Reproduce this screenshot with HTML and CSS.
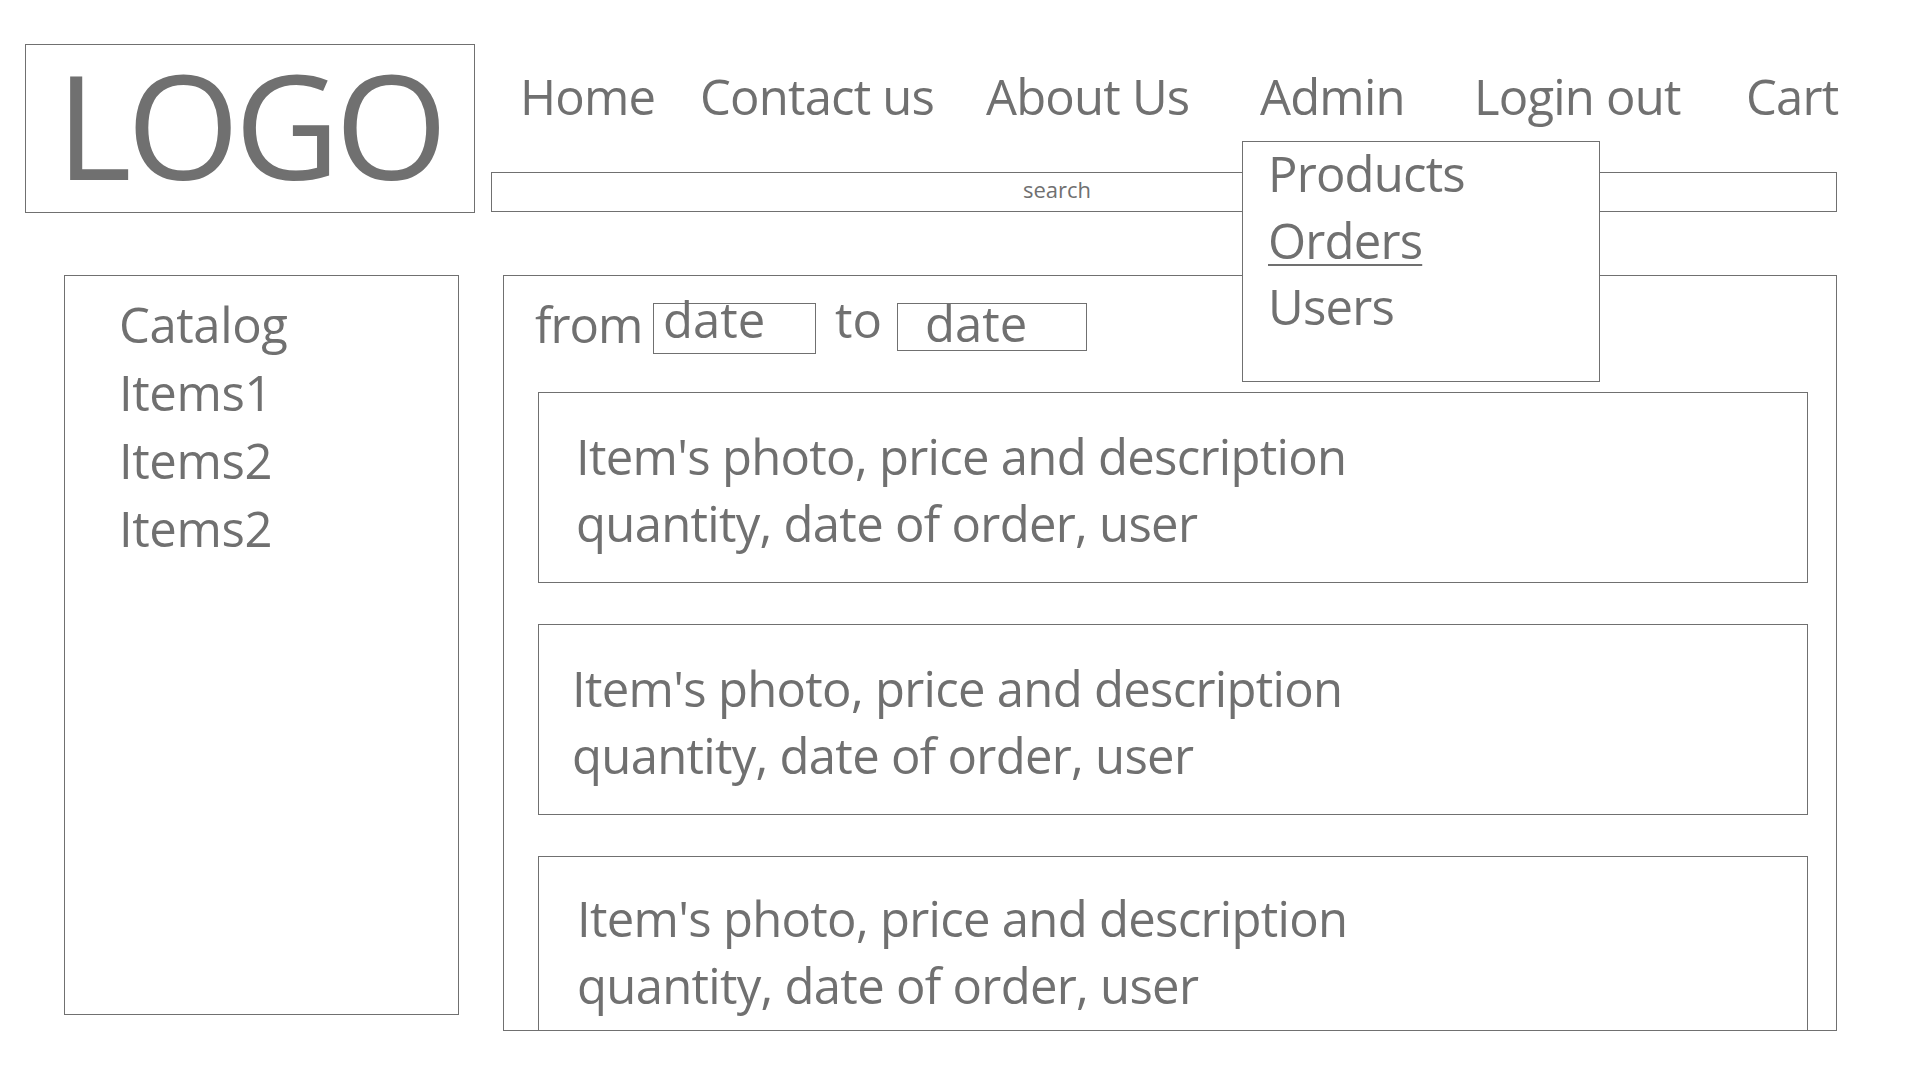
FILE: index.html
```html
<!DOCTYPE html>
<html lang="en">
<head>
<meta charset="utf-8">
<title>Orders - Admin</title>
<link rel="stylesheet" href="styles.css">
</head>
<body>
<div class="page">
  <header class="header">
    <div class="logo"><span class="logo-text">LOGO</span></div>
    <div class="nav-area">
      <nav class="nav">
        <a class="nav-item nav-home">Home</a>
        <a class="nav-item nav-contact">Contact us</a>
        <a class="nav-item nav-about">About Us</a>
        <div class="nav-item nav-admin">Admin
          <div class="dropdown">
            <div class="dropdown-item">Products</div>
            <div class="dropdown-item is-active">Orders</div>
            <div class="dropdown-item">Users</div>
          </div>
        </div>
        <a class="nav-item nav-login">Login out</a>
        <a class="nav-item nav-cart">Cart</a>
      </nav>
      <div class="search">search</div>
    </div>
  </header>

  <div class="content">
    <aside class="sidebar">
      <div class="side-item">Catalog</div>
      <div class="side-item">Items1</div>
      <div class="side-item">Items2</div>
      <div class="side-item">Items2</div>
    </aside>

    <main class="main">
      <div class="filter">
        <span class="filter-label label-from">from</span>
        <span class="date-box date-from">date</span>
        <span class="filter-label label-to">to</span>
        <span class="date-box date-to">date</span>
      </div>
      <div class="orders">
        <div class="order">
          <div class="order-line">Item's photo, price and description</div>
          <div class="order-line">quantity, date of order, user</div>
        </div>
        <div class="order order-shifted">
          <div class="order-line">Item's photo, price and description</div>
          <div class="order-line">quantity, date of order, user</div>
        </div>
        <div class="order order-last">
          <div class="order-line">Item's photo, price and description</div>
          <div class="order-line">quantity, date of order, user</div>
        </div>
      </div>
    </main>
  </div>
</div>
</body>
</html>
```

FILE: styles.css
```css
* {
  box-sizing: border-box;
}

html, body {
  margin: 0;
  padding: 0;
  background: #ffffff;
}

body {
  width: 1920px;
  height: 1080px;
  overflow: hidden;
  color: #707070;
  font-family: "Open Sans", "Noto Sans", sans-serif;
}

.page {
  width: 1920px;
}

/* ---------- header ---------- */
.header {
  display: flex;
  align-items: flex-start;
  gap: 16px;
  padding: 44px 83px 0 25px;
}

.logo {
  flex-shrink: 0;
  width: 450px;
  height: 169px;
  border: 1px solid #707070;
  padding: 0 0 0 30px;
  display: flex;
  align-items: center;
}

.logo-text {
  display: block;
  font-size: 145px;
  line-height: 150px;
  letter-spacing: -5px;
  white-space: nowrap;
  margin-top: -10px;
}

.nav-area {
  flex: 1;
  min-width: 0;
  display: flex;
  flex-direction: column;
}

.nav {
  display: flex;
  height: 128px;
  padding: 18px 0 0 29px;
  font-size: 49px;
  line-height: 68px;
  letter-spacing: -0.8px;
}

.nav-item {
  display: block;
  flex-shrink: 0;
  white-space: nowrap;
  color: #707070;
  text-decoration: none;
}

.nav-home { width: 180px; }
.nav-contact { width: 286px; }
.nav-about { width: 274px; }
.nav-admin { width: 214px; position: relative; }
.nav-login { width: 272px; }
.nav-cart { flex: 1 1 auto; min-width: 0; }

.search {
  height: 40px;
  border: 1px solid #707070;
  font-size: 22px;
  line-height: 33px;
  padding-left: 531px;
}

/* ---------- admin dropdown ---------- */
.dropdown {
  position: absolute;
  z-index: 10;
  left: -18px;
  top: 79px;
  width: 358px;
  height: 241px;
  background: #ffffff;
  border: 1px solid #707070;
  padding: 0 0 0 25px;
  font-size: 49px;
  line-height: 66.5px;
  letter-spacing: -0.8px;
}

.dropdown-item {
  position: relative;
  top: -2px;
}

.dropdown-item.is-active {
  text-decoration: underline;
  text-decoration-thickness: 2px;
  text-underline-offset: 5px;
}

/* ---------- content ---------- */
.content {
  display: flex;
  align-items: flex-start;
  gap: 44px;
  margin-top: 62px;
  padding: 0 83px 0 64px;
}

.sidebar {
  flex-shrink: 0;
  width: 395px;
  height: 740px;
  border: 1px solid #707070;
  padding: 14px 0 0 54px;
  font-size: 49px;
  line-height: 68px;
  letter-spacing: -0.4px;
}

.main {
  flex: 1;
  min-width: 0;
  height: 756px;
  border: 1px solid #707070;
  overflow: hidden;
  padding: 27px 28px 0 34px;
}

.filter {
  display: flex;
  align-items: flex-start;
  height: 51px;
  font-size: 49px;
}

.filter-label {
  display: block;
  white-space: nowrap;
}

.label-from {
  width: 118px;
  margin-left: -3px;
  line-height: 42px;
  letter-spacing: -1px;
}

.label-to {
  width: 62px;
  margin-left: 19px;
  line-height: 32px;
}

.date-box {
  display: block;
  border: 1px solid #707070;
}

.date-from {
  width: 163px;
  height: 51px;
  padding-left: 9px;
  line-height: 30px;
}

.date-to {
  width: 190px;
  height: 48px;
  padding-left: 27px;
  line-height: 38px;
}

.orders {
  display: flex;
  flex-direction: column;
  gap: 41px;
  margin-top: 38px;
}

.order {
  height: 191px;
  flex-shrink: 0;
  border: 1px solid #707070;
  padding: 30px 0 0 37px;
  font-size: 49px;
  line-height: 67px;
  letter-spacing: -0.7px;
  white-space: nowrap;
}

.order-shifted {
  padding-left: 33px;
}

.order-last {
  padding-top: 28px;
  padding-left: 38px;
}
```
